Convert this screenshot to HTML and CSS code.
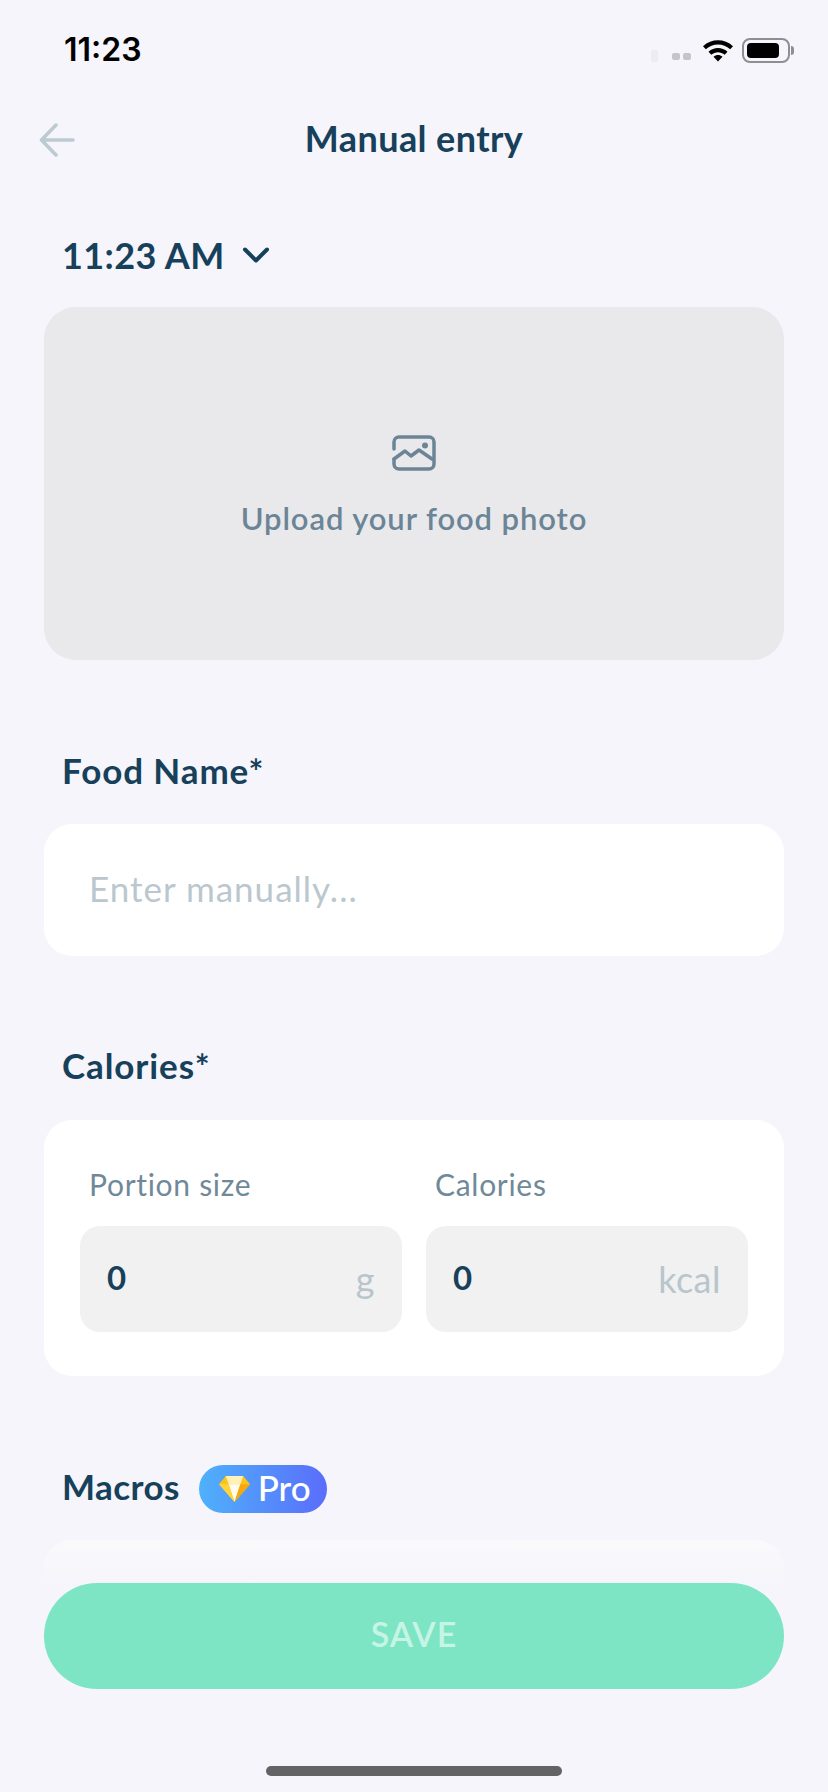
FILE: index.html
```html
<!DOCTYPE html>
<html lang="en">
<head>
    <meta charset="UTF-8">
    <title>Manual entry</title>
    <link rel="stylesheet" href="styles.css">
</head>
<body>
<div class="screen">
    <!--status bar-->
    <div class="status_bar">
        <span class="status_time">11:23</span>
        <div class="status_icons">
            <span class="signal_bar signal_faint"></span>
            <span class="signal_dots"><span></span><span></span></span>
            <svg class="wifi" width="32" height="24" viewBox="0 0 32 24">
                <path d="M1 8.2C9.500 0.300 22.500 0.300 31 8.200L28.200 11.200C21.200 4.900 10.800 4.900 3.800 11.200Z" fill="#000"/>
                <path d="M6.500 13.800C12 8.800 20 8.800 25.500 13.800L22.700 16.800C18.700 13.300 13.300 13.300 9.300 16.800Z" fill="#000"/>
                <path d="M11.500 18.800C14.200 16.500 17.800 16.500 20.500 18.800L16 23.500Z" fill="#000"/>
            </svg>
            <div class="battery">
                <div class="battery_body"><div class="battery_fill"></div></div>
                <div class="battery_cap"></div>
            </div>
        </div>
    </div>

    <!--title-->
    <div class="top_bar">
        <svg class="back_arrow" width="36" height="34" viewBox="0 0 36 34">
            <path d="M34 17H3M17 2L2.500 17L17 32" fill="none" stroke="#bccad1" stroke-width="3.500" stroke-linecap="round" stroke-linejoin="round"/>
        </svg>
        <h1 class="page_title">Manual entry</h1>
    </div>

    <div class="time_row">
        <span class="time_text">11:23 AM</span>
        <svg width="28" height="18" viewBox="0 0 28 18">
            <path d="M3 3.500L14 14.500L25 3.500" fill="none" stroke="#17405a" stroke-width="4" stroke-linecap="round" stroke-linejoin="round"/>
        </svg>
    </div>

    <!--photo upload-->
    <div class="photo_box">
        <svg width="44" height="36" viewBox="0 0 44 36">
            <path d="M2 14V7A5 5 0 0 1 7 2H37A5 5 0 0 1 42 7V29A5 5 0 0 1 37 34H7A5 5 0 0 1 2 29V24" fill="none" stroke="#6b8596" stroke-width="3.500" stroke-linecap="round"/>
            <path d="M2 24L13 16L19 21L27 15L40 24" fill="none" stroke="#6b8596" stroke-width="3.500" stroke-linecap="round" stroke-linejoin="round"/>
            <circle cx="33" cy="10.500" r="3" fill="#6b8596"/>
        </svg>
        <span class="photo_text">Upload your food photo</span>
    </div>

    <h2 class="section_title food_title">Food Name*</h2>
    <div class="card name_card">
        <span class="placeholder">Enter manually...</span>
    </div>

    <h2 class="section_title calories_title">Calories*</h2>
    <div class="card calories_card">
        <div class="field">
            <span class="field_label">Portion size</span>
            <div class="field_input"><span class="field_value">0</span><span class="field_unit">g</span></div>
        </div>
        <div class="field">
            <span class="field_label">Calories</span>
            <div class="field_input"><span class="field_value">0</span><span class="field_unit">kcal</span></div>
        </div>
    </div>

    <div class="macros_head">
        <h2 class="section_title macros_title">Macros</h2>
        <span class="pro_badge">
            <svg width="33" height="28" viewBox="0 0 34 30" preserveAspectRatio="none">
                <polygon points="8,1 26,1 33,10 17,29 1,10" fill="#fcc419"/>
                <polygon points="8,1 26,1 23,10 11,10" fill="#fff1b8"/>
                <polygon points="11,10 23,10 17,29" fill="#fffdf0"/>
                <polygon points="1,10 11,10 17,29" fill="#ffd43b"/>
                <polygon points="23,10 33,10 17,29" fill="#f5a90f"/>
            </svg>
            <span class="pro_text">Pro</span>
        </span>
    </div>
    <div class="card macros_card"></div>

    <!--bottom button lies over the list-->
    <div class="bottom_fade"></div>
    <div class="save_btn">SAVE</div>
    <div class="home_bar"></div>
</div>
</body>
</html>
```

FILE: styles.css
```css
*{
    margin: 0;
    padding: 0;
    box-sizing: border-box;
}
body
{
    width: 828px;
    height: 1792px;
    overflow: hidden;
    background: #f5f5fb;
    font-family: "Lato", "Open Sans", sans-serif;
    color: #17405a;
}
.screen
{
    position: relative;
    width: 828px;
    height: 1792px;
    padding: 0 44px;
    overflow: hidden;
}
.status_bar
{
    height: 100px;
    margin: 0 -44px;
    padding: 30px 34px 0 64px;
    display: flex;
    justify-content: space-between;
    align-items: flex-start;
}
.status_time
{
    font-family: "Inter", "Liberation Sans", sans-serif;
    font-size: 32px;
    font-weight: 600;
    line-height: 40px;
    color: #000;
}
.status_icons
{
    display: flex;
    align-items: center;
    height: 40px;
}
.signal_bar
{
    width: 7px;
    height: 12px;
    margin-top: 12px;
    border-radius: 2px;
    background: #ececf1;
}
.signal_dots
{
    display: flex;
    gap: 3px;
    margin: 12px 11px 0 14px;
}
.signal_dots span
{
    width: 8px;
    height: 7px;
    border-radius: 2px;
    background: #c4c4c9;
}
.battery
{
    display: flex;
    align-items: center;
    margin-left: 8px;
}
.battery_body
{
    width: 48px;
    height: 25px;
    padding: 3px;
    border: 2px solid #8e8e93;
    border-radius: 8px;
}
.battery_fill
{
    width: 32px;
    height: 100%;
    border-radius: 4px;
    background: #000;
}
.battery_cap
{
    width: 3px;
    height: 9px;
    margin-left: 1px;
    border-radius: 0 3px 3px 0;
    background: #8e8e93;
}
.top_bar
{
    height: 76px;
    position: relative;
    display: flex;
    align-items: center;
    justify-content: center;
}
.back_arrow
{
    position: absolute;
    left: -5px;
    top: 23px;
}
.page_title
{
    font-size: 36px;
    font-weight: 700;
    letter-spacing: 0.4px;
}
.time_row
{
    height: 60px;
    margin-top: 49px;
    padding-left: 18px;
    display: flex;
    align-items: center;
    gap: 17px;
}
.time_text
{
    font-size: 36px;
    font-weight: 700;
    letter-spacing: 0.4px;
}
.photo_box
{
    height: 353px;
    margin-top: 22px;
    border-radius: 32px;
    background: #e9e9ec;
    display: flex;
    flex-direction: column;
    align-items: center;
    padding-top: 128px;
}
.photo_text
{
    margin-top: 28px;
    font-size: 31px;
    font-weight: 600;
    letter-spacing: 0.9px;
    color: #6b8596;
}
.section_title
{
    font-size: 35px;
    font-weight: 700;
    line-height: 42px;
    padding-bottom: 2px;
    letter-spacing: 0.9px;
}
.food_title
{
    margin: 89px 0 0 18px;
}
.macros_title
{
    letter-spacing: 0.4px;
    line-height: 38px;
    padding-bottom: 6px;
}
.card
{
    background: #fff;
    border-radius: 28px;
}
.name_card
{
    height: 132px;
    margin-top: 31px;
    padding: 0 0 4px 45px;
    display: flex;
    align-items: center;
}
.placeholder
{
    font-size: 35px;
    letter-spacing: 1px;
    color: #bac7ce;
}
.calories_title
{
    margin: 88px 0 0 18px;
}
.calories_card
{
    height: 256px;
    margin-top: 32px;
    padding: 44px 36px 0;
    display: flex;
    gap: 24px;
}
.field
{
    flex: 1;
}
.field_label
{
    display: block;
    height: 62px;
    padding-left: 9px;
    font-size: 30px;
    line-height: 41px;
    letter-spacing: 0.7px;
    color: #6f8999;
}
.field_input
{
    height: 106px;
    padding: 0 27px 0 27px;
    border-radius: 20px;
    background: #f1f1f2;
    display: flex;
    justify-content: space-between;
    align-items: center;
}
.field_value
{
    font-size: 33px;
    font-weight: 700;
    margin-top: -4px;
}
.field_unit
{
    font-size: 36px;
    letter-spacing: 0.5px;
    color: #b8c5cc;
}
.macros_head
{
    height: 48px;
    margin: 89px 0 0 18px;
    display: flex;
    align-items: center;
    gap: 19px;
}
.pro_badge
{
    width: 128px;
    height: 48px;
    padding-left: 19px;
    border-radius: 24px;
    background: linear-gradient(90deg, #4fb1fb, #5a6dfb);
    display: flex;
    align-items: center;
    gap: 7px;
    font-size: 35px;
    font-weight: 500;
    color: #fff;
}
.pro_text
{
    line-height: 40px;
    padding-bottom: 4px;
}
.macros_card
{
    height: 300px;
    margin-top: 27px;
}
.bottom_fade
{
    position: absolute;
    left: 0;
    right: 0;
    top: 1540px;
    bottom: 0;
    background: linear-gradient(180deg, rgba(245,245,251,0.5) 0, #f5f5fb 43px);
}
.save_btn
{
    position: absolute;
    left: 44px;
    right: 44px;
    top: 1583px;
    height: 106px;
    padding-bottom: 6px;
    border-radius: 53px;
    background: #7de5c3;
    display: flex;
    align-items: center;
    justify-content: center;
    font-size: 34px;
    font-weight: 600;
    letter-spacing: 1px;
    color: #c6f4e5;
}
.home_bar
{
    position: absolute;
    left: 266px;
    top: 1766px;
    width: 296px;
    height: 10px;
    border-radius: 5px;
    background: #636366;
}
```
